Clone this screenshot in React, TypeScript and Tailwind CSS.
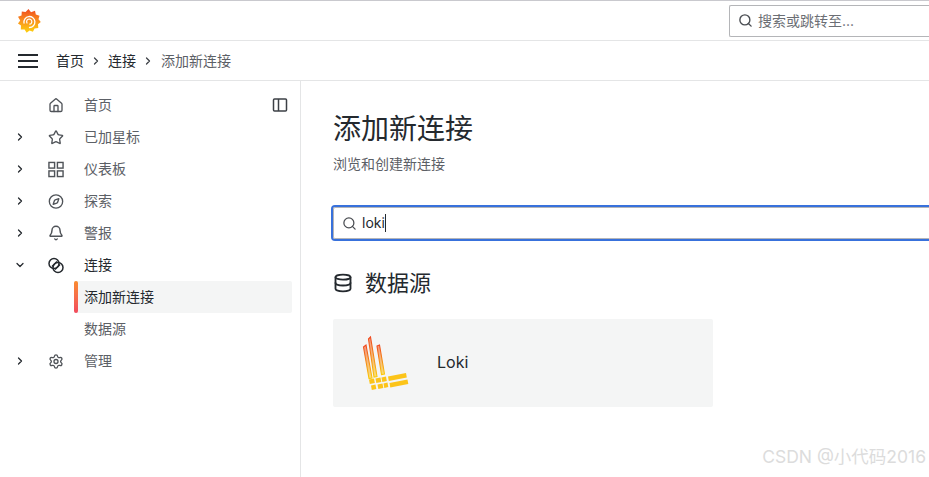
import { Bell, ChevronDown, ChevronRight, Compass, Database, Home, Search, Settings, Star } from 'lucide-react';
import type { ReactNode } from 'react';

function GrafanaLogo() {
  return (
    <svg width="24" height="26" viewBox="0 0 24 26">
      <defs>
        <linearGradient id="grafana" x1="0" y1="1" x2="0" y2="0">
          <stop offset="0" stopColor="#fdd20e" />
          <stop offset="0.5" stopColor="#f9921e" />
          <stop offset="1" stopColor="#f0481f" />
        </linearGradient>
      </defs>
      <path
        fill="url(#grafana)"
        d="M11.500 1l2.500 3.200 4-1.400.800 3.800 3.700 1.200-1 3.500 2.300 2.700-2.800 2.300.3 3.700-3.700.5-1.700 3.300-3.300-1.400-3 2.300-2-3.100-3.800-.2.200-3.800-3-2.200 2.200-3L1 8.800l3.500-1.400.300-3.800 3.700.5z"
      />
      <path d="M7 15a5.500 5.500 0 1 1 5.500 4.500" fill="none" stroke="#fff" strokeWidth="1.300" strokeLinecap="round" />
      <path d="M10 15a2.600 2.600 0 1 1 2.800 1.200" fill="none" stroke="#fff" strokeWidth="1.200" strokeLinecap="round" />
    </svg>
  );
}

function LokiLogo() {
  return (
    <svg width="50" height="56" viewBox="0 0 50 56">
      <defs>
        <linearGradient id="loki" x1="0" y1="0" x2="0" y2="1">
          <stop offset="0" stopColor="#f0481f" />
          <stop offset="1" stopColor="#fbca0a" />
        </linearGradient>
      </defs>
      <g fill="url(#loki)" fillOpacity="0.55" stroke="url(#loki)" strokeWidth="1.100">
        <path d="M3.500 12l2.500-2 6 33-3 .5z" />
        <path d="M8.500 4l2-2 6.500 39.500-3 .5z" />
        <path d="M17 11l2.500-1 5 29-3 .5z" />
      </g>
      <g fill="#fcc419">
        <path d="M9 44.500l5-1 .800 4.500-5 1z" />
        <path d="M15.500 43.500l5-1 .800 4.500-5 1z" />
        <path d="M21.500 42.500l4.500-1 .800 4.500-4.500 1z" />
        <path d="M11 50.500l4.500-1 .800 4.500-4.500 1z" />
        <path d="M17.500 49.500l5-1 .800 4.500-5 1z" />
        <path d="M23.500 48.500l4-1 .800 4.500-4 1z" />
        <path d="M28 41.500l18-3.500.800 4.500-18 3.500z" />
        <path d="M29.500 48l18-3.500.800 4.500-18 3.500z" />
      </g>
    </svg>
  );
}

function ConnectIcon() {
  return (
    <svg width="17" height="17" viewBox="0 0 16 16" fill="none" stroke="#24292e" strokeWidth="1.500">
      <circle cx="6" cy="6" r="5" />
      <circle cx="10" cy="10" r="5" />
      <path d="M4 9l5-5M7 12l5-5" />
    </svg>
  );
}

function GridIcon() {
  return (
    <svg width="17" height="17" viewBox="0 0 17 17" fill="none" stroke="currentColor" strokeWidth="1.500">
      <rect x="1" y="1" width="6" height="6" />
      <rect x="10" y="1" width="6" height="6" />
      <rect x="1" y="10" width="6" height="6" />
      <rect x="10" y="10" width="6" height="6" />
    </svg>
  );
}

function NavRow({
  icon,
  label,
  caret,
  active,
}: {
  icon: ReactNode;
  label: string;
  caret?: 'right' | 'down';
  active?: boolean;
}) {
  return (
    <div className="flex h-8 items-center">
      <div className="flex w-10 justify-center text-[#24292e]">
        {caret === 'right' && <ChevronRight size={12} strokeWidth={2.5} />}
        {caret === 'down' && <ChevronDown size={12} strokeWidth={2.5} />}
      </div>
      <div className="ml-2 flex w-4 justify-center text-[#4f5358]">{icon}</div>
      <span className={`ml-5 text-sm ${active ? 'text-[#24292e]' : 'text-[#5c6066]'}`}>{label}</span>
    </div>
  );
}

export default function App() {
  return (
    <div
      className="relative flex h-[477px] w-[929px] flex-col overflow-hidden bg-white"
      style={{ fontFamily: '"Inter", "Noto Sans CJK SC", sans-serif' }}
    >
      {/* Top bar */}
      <header className="flex h-[41px] shrink-0 items-center justify-between border-t border-b border-t-[#c9c9ce] border-b-[#e4e5e6] pl-[17px]">
        <GrafanaLogo />
        <div className="flex h-8 w-[200px] items-center rounded-l-[2px] border border-r-0 border-[#b4b5b8] pl-2 text-sm text-[#6b6e74]">
          <Search size={15} className="mr-[5px] text-[#4a4d52]" strokeWidth={2.2} />
          搜索或跳转至...
        </div>
      </header>

      {/* Breadcrumbs */}
      <div className="flex h-10 shrink-0 items-center border-b border-[#e4e5e6] pl-[18px] text-sm">
        <div className="flex w-5 flex-col gap-1">
          <span className="h-0.5 bg-[#24292e]" />
          <span className="h-0.5 bg-[#24292e]" />
          <span className="h-0.5 bg-[#24292e]" />
        </div>
        <span className="ml-[18px] text-[#24292e]">首页</span>
        <ChevronRight size={12} className="mx-[6px] text-[#3c4046]" strokeWidth={2.5} />
        <span className="text-[#24292e]">连接</span>
        <ChevronRight size={12} className="ml-[6px] mr-[7px] text-[#3c4046]" strokeWidth={2.5} />
        <span className="text-[#5c6066]">添加新连接</span>
      </div>

      <div className="flex min-h-0 flex-1">
        {/* Sidebar */}
        <aside className="w-[301px] shrink-0 border-r border-[#e4e5e6] pt-2">
          <div className="flex items-center pr-[12px]">
            <div className="flex-1">
              <NavRow icon={<Home size={17} />} label="首页" />
            </div>
            <svg width="16" height="16" viewBox="0 0 16 16" fill="none" stroke="#3c4046" strokeWidth="1.500">
              <rect x="1.500" y="2" width="13" height="12" rx="1" />
              <path d="M6.500 2v12" />
            </svg>
          </div>
          <NavRow icon={<Star size={17} />} label="已加星标" caret="right" />
          <NavRow icon={<GridIcon />} label="仪表板" caret="right" />
          <NavRow icon={<Compass size={17} />} label="探索" caret="right" />
          <NavRow icon={<Bell size={16} strokeWidth={2.2} />} label="警报" caret="right" />
          <NavRow icon={<ConnectIcon />} label="连接" caret="down" active />
          <div className="ml-[74px] mr-2 flex h-8 items-center rounded-[2px] bg-[#f4f5f5]">
            <span className="h-8 w-1 rounded-[2px] bg-gradient-to-b from-[#f98a2b] to-[#f2495c]" />
            <span className="ml-[6px] text-sm text-[#24292e]">添加新连接</span>
          </div>
          <div className="flex h-8 items-center pl-[84px] text-sm text-[#5c6066]">数据源</div>
          <NavRow icon={<Settings size={17} />} label="管理" caret="right" />
        </aside>

        {/* Content */}
        <main className="min-w-0 flex-1 pl-8 pt-[27px]">
          <h1 className="text-[28px] leading-[42px] text-[#24292e]">添加新连接</h1>
          <p className="mt-[4px] text-sm leading-5 text-[#5c6066]">浏览和创建新连接</p>

          <div className="-ml-0.5 mt-[31px] flex h-9 items-center rounded-l-[4px] border-2 border-r-0 border-[#3871dc] p-0">
            <div className="flex h-8 w-full items-center rounded-l-[2px] border border-r-0 border-[#b4b5b8] pl-2 text-sm text-[#24292e]">
              <Search size={15} className="mr-[5px] text-[#4a4d52]" />
              loki
              <span className="h-[18px] w-px bg-[#24292e]" />
            </div>
          </div>

          <div className="mt-[26px] flex items-center">
            <Database size={20} className="text-[#24292e]" strokeWidth={2.200} />
            <h2 className="ml-[12px] text-[22px] leading-8 text-[#24292e]">数据源</h2>
          </div>

          <div className="mt-[20px] flex h-[88px] w-[380px] items-center rounded-[2px] bg-[#f4f5f5] pl-[27px]">
            <LokiLogo />
            <span className="mb-0.5 ml-[27px] text-base text-[#24292e]">Loki</span>
          </div>
        </main>
      </div>

      <span className="absolute bottom-[7px] right-[3px] text-[17.500px] text-[#dcdcdc]">CSDN @小代码2016</span>
    </div>
  );
}
